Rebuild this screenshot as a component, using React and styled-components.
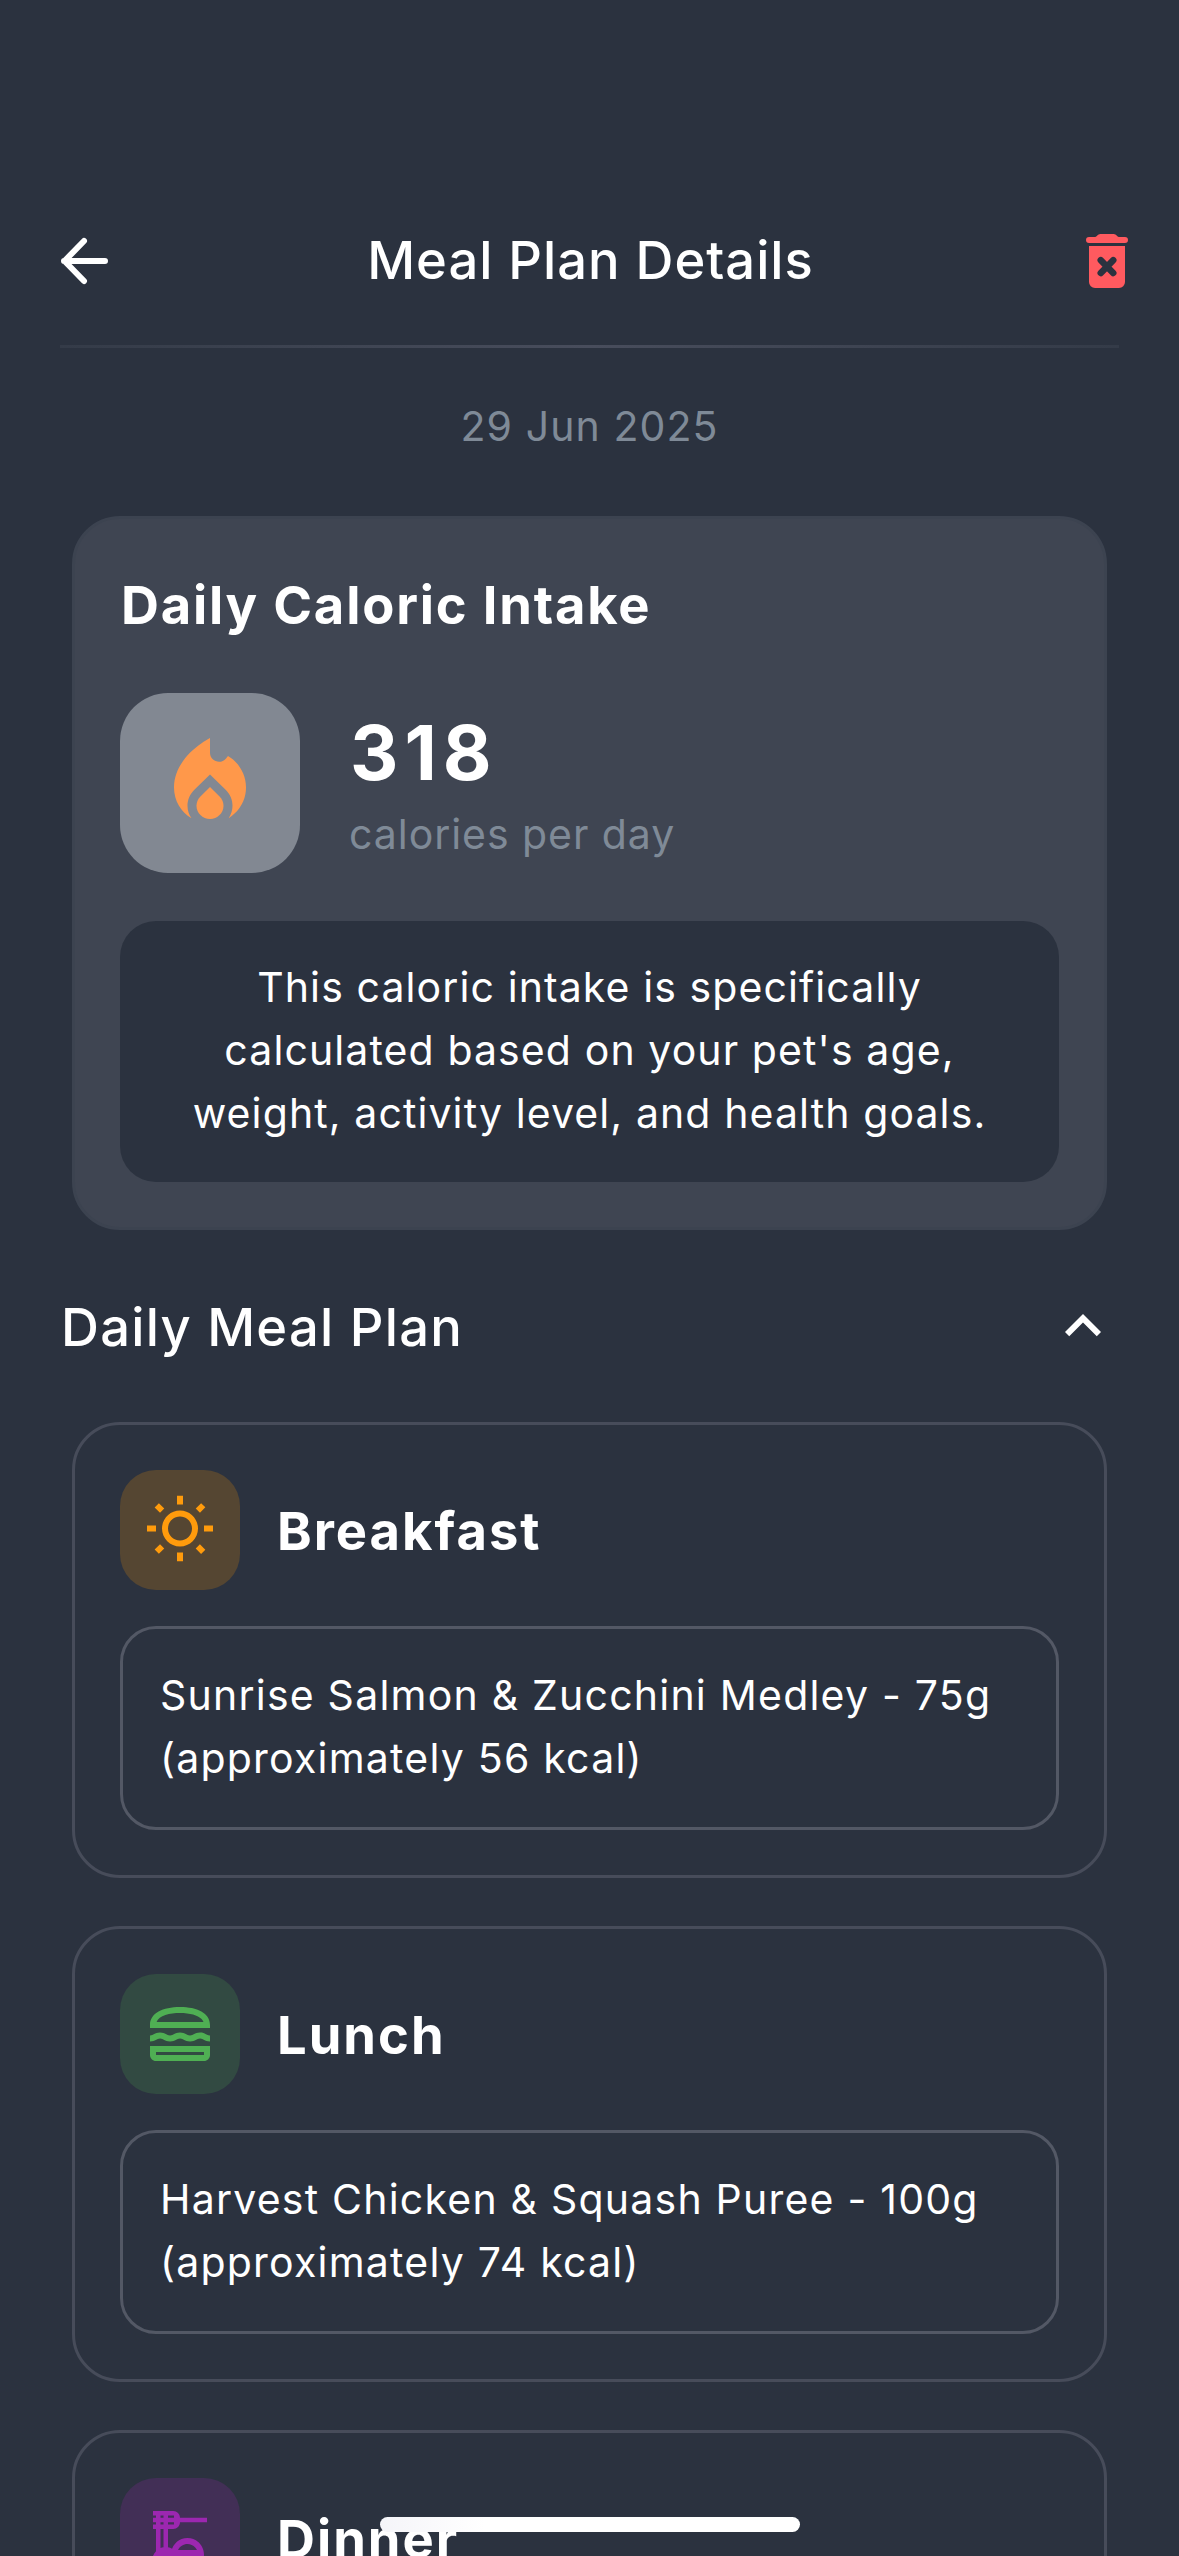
import React from "react";
import styled, { createGlobalStyle } from "styled-components";
import {
  MdLocalFireDepartment,
  MdKeyboardArrowUp,
  MdOutlineWbSunny,
  MdOutlineLunchDining,
  MdOutlineDinnerDining,
} from "react-icons/md";

const GlobalStyle = createGlobalStyle`
  *, *::before, *::after { box-sizing: border-box; }
  html, body { margin: 0; background: #2b323f; overflow: hidden; }
`;

const Screen = styled.div`
  position: relative;
  width: 1179px;
  height: 2556px;
  overflow: hidden;
  padding-top: 222px;
  background: #2b323f;
  color: #ffffff;
  font-family: Inter, "Liberation Sans", sans-serif;
`;

const Header = styled.header`
  display: grid;
  grid-template-columns: 84px 1fr 84px;
  align-items: center;
  height: 78px;
  padding: 0 48px;
`;

const IconButton = styled.button`
  display: flex;
  align-items: center;
  justify-content: ${(p) => (p.$end ? "flex-end" : "flex-start")};
  height: 78px;
  margin: 0;
  padding: ${(p) => (p.$end ? "0 3px 0 0" : "0 0 0 12px")};
  border: 0;
  background: none;

  svg {
    display: block;
  }
`;

const Title = styled.h1`
  margin: 0 0 2px;
  padding-left: 2px;
  font-size: 52.5px;
  font-weight: 500;
  line-height: 72px;
  letter-spacing: 0.98px;
  text-align: center;
  white-space: nowrap;
`;

const Divider = styled.div`
  height: 3px;
  margin: 45px 60px 0;
  background: linear-gradient(90deg, #343b48, #484d5c 50%, #343b48);
`;

const DateLabel = styled.p`
  margin: 48px 0 60px;
  font-size: 41px;
  line-height: 60px;
  letter-spacing: 1.08px;
  text-align: center;
  color: #7f8a97;
`;

const CalorieCard = styled.section`
  margin: 0 72px;
  padding: 45px;
  border: 3px solid #3c4350;
  border-radius: 48px;
  background: #3f4552;
`;

const CardTitle = styled.h2`
  margin: 0 0 47px 1px;
  font-size: 52.5px;
  font-weight: 700;
  line-height: 82px;
  letter-spacing: 1.8px;
  white-space: nowrap;
`;

const CalorieRow = styled.div`
  display: flex;
  align-items: center;
  gap: 48px;
`;

const FlameTile = styled.div`
  display: flex;
  align-items: center;
  justify-content: center;
  width: 180px;
  height: 180px;
  border-radius: 48px;
  background: #828892;
  color: #ff984a;
`;

const CalorieText = styled.div`
  display: flex;
  flex-direction: column;
  gap: 6px;
  padding-top: 6px;
`;

const CalorieValue = styled.div`
  margin-left: 2px;
  font-size: 75px;
  font-weight: 700;
  line-height: 90px;
  letter-spacing: 6px;
`;

const CalorieUnit = styled.div`
  margin-left: 1px;
  font-size: 41px;
  line-height: 60px;
  letter-spacing: 0.95px;
  color: #7f8a97;
`;

const InfoBox = styled.p`
  margin: 48px 0 0;
  padding: 35px 48px 37px;
  border-radius: 36px;
  background: #2b323f;
  font-size: 41px;
  line-height: 63px;
  letter-spacing: 1.1px;
  text-align: center;
`;

const SectionHeader = styled.div`
  display: flex;
  align-items: center;
  justify-content: space-between;
  height: 192px;
  padding: 0 60px 0 61px;
`;

const SectionTitle = styled.h2`
  margin: 2px 0 0;
  font-size: 52.5px;
  font-weight: 500;
  line-height: 72px;
  letter-spacing: 1.25px;
`;

const MealList = styled.div`
  display: flex;
  flex-direction: column;
  gap: 48px;
  padding: 0 72px;
`;

const MealCard = styled.article`
  padding: 45px;
  border: 3px solid #474c5a;
  border-radius: 48px;
`;

const MealHeader = styled.div`
  display: flex;
  align-items: center;
  gap: 37px;
`;

const MealTile = styled.div`
  display: flex;
  align-items: center;
  justify-content: center;
  width: 120px;
  height: 120px;
  border-radius: 36px;
  background: ${(p) => p.$tint};
  color: ${(p) => p.$color};
`;

const MealName = styled.h3`
  margin: 2px 0 0;
  font-size: 52.5px;
  font-weight: 700;
  line-height: 72px;
  letter-spacing: 2px;
`;

const MealBox = styled.p`
  margin: 36px 0 0;
  padding: 35px 36px 37px 37px;
  border: 3px solid #535865;
  border-radius: 36px;
  font-size: 41px;
  line-height: 63px;
  letter-spacing: 1.22px;
  white-space: nowrap;
`;

const HomeIndicator = styled.div`
  position: absolute;
  left: 380px;
  bottom: 24px;
  width: 420px;
  height: 15px;
  border-radius: 8px;
  background: linear-gradient(90deg, #f5f5f9, #ffffff 25%);
`;

const BackArrow = () => (
  <svg width="48" height="48" viewBox="0 0 48 48" fill="none" stroke="#fff" strokeWidth="6" strokeLinecap="round" strokeLinejoin="round">
    <path d="M45 24H4M24 4L4.5 24L24 44" />
  </svg>
);

const TrashIcon = () => (
  <svg width="42" height="54" viewBox="0 0 42 54">
    <path
      fill="#ff5a5f"
      d="M3 3h6.2c1.6 0 2.3-3 5.2-3h13.2c2.9 0 3.6 3 5.2 3H39a3 3 0 0 1 0 6H3a3 3 0 0 1 0-6zM3 12h36v36a6 6 0 0 1-6 6H9a6 6 0 0 1-6-6z"
    />
    <path stroke="#2b323f" strokeWidth="6.6" strokeLinecap="round" d="M14.8 26.2l12.4 12.8M27.2 26.2l-12.4 12.8" />
  </svg>
);

const meals = [
  {
    name: "Breakfast",
    Icon: MdOutlineWbSunny,
    color: "#ff9b0c",
    tint: "#554632",
    lines: ["Sunrise Salmon & Zucchini Medley - 75g", "(approximately 56 kcal)"],
  },
  {
    name: "Lunch",
    Icon: MdOutlineLunchDining,
    color: "#4faf53",
    tint: "#324a42",
    lines: ["Harvest Chicken & Squash Puree - 100g", "(approximately 74 kcal)"],
  },
  {
    name: "Dinner",
    Icon: MdOutlineDinnerDining,
    color: "#9c27b0",
    tint: "#422f56",
    lines: [],
  },
];

export default function App() {
  return (
    <Screen>
      <GlobalStyle />
      <Header>
        <IconButton aria-label="Back">
          <BackArrow />
        </IconButton>
        <Title>Meal Plan Details</Title>
        <IconButton $end aria-label="Delete">
          <TrashIcon />
        </IconButton>
      </Header>
      <Divider />
      <DateLabel>29 Jun 2025</DateLabel>

      <CalorieCard>
        <CardTitle>Daily Caloric Intake</CardTitle>
        <CalorieRow>
          <FlameTile>
            <MdLocalFireDepartment size={108} />
          </FlameTile>
          <CalorieText>
            <CalorieValue>318</CalorieValue>
            <CalorieUnit>calories per day</CalorieUnit>
          </CalorieText>
        </CalorieRow>
        <InfoBox>
          This caloric intake is specifically
          <br />
          calculated based on your pet's age,
          <br />
          weight, activity level, and health goals.
        </InfoBox>
      </CalorieCard>

      <SectionHeader>
        <SectionTitle>Daily Meal Plan</SectionTitle>
        <MdKeyboardArrowUp size={72} />
      </SectionHeader>

      <MealList>
        {meals.map(({ name, Icon, color, tint, lines }) => (
          <MealCard key={name}>
            <MealHeader>
              <MealTile $tint={tint} $color={color}>
                <Icon size={72} />
              </MealTile>
              <MealName>{name}</MealName>
            </MealHeader>
            {lines.length > 0 && (
              <MealBox>
                {lines[0]}
                <br />
                {lines[1]}
              </MealBox>
            )}
          </MealCard>
        ))}
      </MealList>
      <HomeIndicator />
    </Screen>
  );
}
